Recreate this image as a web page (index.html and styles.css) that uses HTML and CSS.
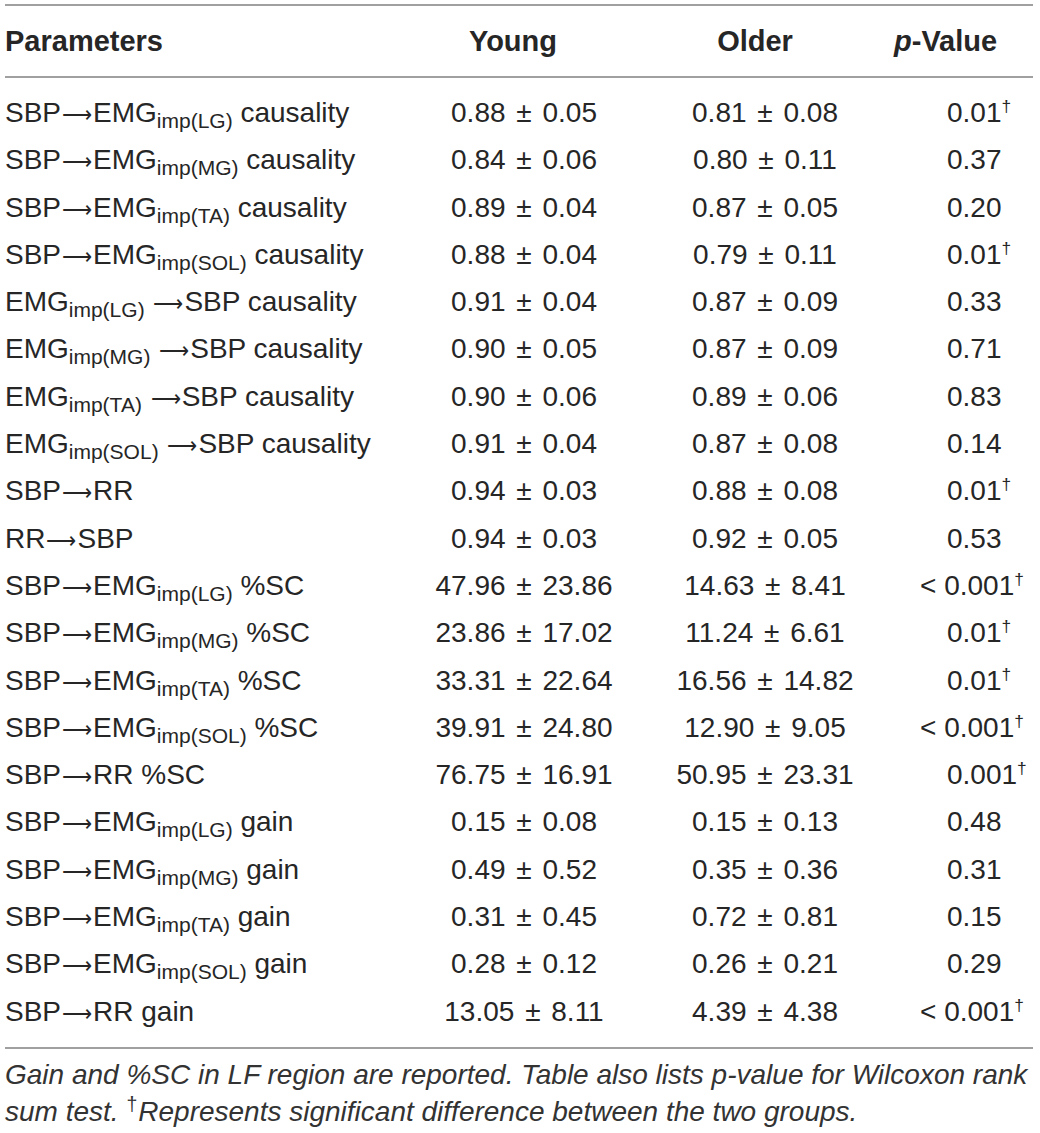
FILE: index.html
```html
<!DOCTYPE html>
<html>
<head>
    <title>Baroreflex and muscle causality</title>
    <link rel="stylesheet" href="styles.css">
</head>

<body>
    <table class="dataTable">
        <colgroup>
            <col class="colParam">
            <col class="colYoung">
            <col class="colOlder">
            <col class="colP">
        </colgroup>
        <thead>
            <tr>
                <th class="param">Parameters</th>
                <th class="youngHead">Young</th>
                <th class="olderHead">Older</th>
                <th class="pHead"><i>p</i>-Value</th>
            </tr>
        </thead>
        <tbody>
            <tr><td class="param">SBP<span class="arr">&#x27F6;</span>EMG<sub>imp(LG)</sub> causality</td><td class="num">0.88 &plusmn; 0.05</td><td class="num">0.81 &plusmn; 0.08</td><td class="pVal">0.01<sup>&dagger;</sup></td></tr>
            <tr><td class="param">SBP<span class="arr">&#x27F6;</span>EMG<sub>imp(MG)</sub> causality</td><td class="num">0.84 &plusmn; 0.06</td><td class="num">0.80 &plusmn; 0.11</td><td class="pVal">0.37</td></tr>
            <tr><td class="param">SBP<span class="arr">&#x27F6;</span>EMG<sub>imp(TA)</sub> causality</td><td class="num">0.89 &plusmn; 0.04</td><td class="num">0.87 &plusmn; 0.05</td><td class="pVal">0.20</td></tr>
            <tr><td class="param">SBP<span class="arr">&#x27F6;</span>EMG<sub>imp(SOL)</sub> causality</td><td class="num">0.88 &plusmn; 0.04</td><td class="num">0.79 &plusmn; 0.11</td><td class="pVal">0.01<sup>&dagger;</sup></td></tr>
            <tr><td class="param">EMG<sub>imp(LG)</sub> <span class="arr">&#x27F6;</span>SBP causality</td><td class="num">0.91 &plusmn; 0.04</td><td class="num">0.87 &plusmn; 0.09</td><td class="pVal">0.33</td></tr>
            <tr><td class="param">EMG<sub>imp(MG)</sub> <span class="arr">&#x27F6;</span>SBP causality</td><td class="num">0.90 &plusmn; 0.05</td><td class="num">0.87 &plusmn; 0.09</td><td class="pVal">0.71</td></tr>
            <tr><td class="param">EMG<sub>imp(TA)</sub> <span class="arr">&#x27F6;</span>SBP causality</td><td class="num">0.90 &plusmn; 0.06</td><td class="num">0.89 &plusmn; 0.06</td><td class="pVal">0.83</td></tr>
            <tr><td class="param">EMG<sub>imp(SOL)</sub> <span class="arr">&#x27F6;</span>SBP causality</td><td class="num">0.91 &plusmn; 0.04</td><td class="num">0.87 &plusmn; 0.08</td><td class="pVal">0.14</td></tr>
            <tr><td class="param">SBP<span class="arr">&#x27F6;</span>RR</td><td class="num">0.94 &plusmn; 0.03</td><td class="num">0.88 &plusmn; 0.08</td><td class="pVal">0.01<sup>&dagger;</sup></td></tr>
            <tr><td class="param">RR<span class="arr">&#x27F6;</span>SBP</td><td class="num">0.94 &plusmn; 0.03</td><td class="num">0.92 &plusmn; 0.05</td><td class="pVal">0.53</td></tr>
            <tr><td class="param">SBP<span class="arr">&#x27F6;</span>EMG<sub>imp(LG)</sub> %SC</td><td class="num">47.96 &plusmn; 23.86</td><td class="num">14.63 &plusmn; 8.41</td><td class="pVal"><span class="lt">&lt; </span>0.001<sup>&dagger;</sup></td></tr>
            <tr><td class="param">SBP<span class="arr">&#x27F6;</span>EMG<sub>imp(MG)</sub> %SC</td><td class="num">23.86 &plusmn; 17.02</td><td class="num">11.24 &plusmn; 6.61</td><td class="pVal">0.01<sup>&dagger;</sup></td></tr>
            <tr><td class="param">SBP<span class="arr">&#x27F6;</span>EMG<sub>imp(TA)</sub> %SC</td><td class="num">33.31 &plusmn; 22.64</td><td class="num">16.56 &plusmn; 14.82</td><td class="pVal">0.01<sup>&dagger;</sup></td></tr>
            <tr><td class="param">SBP<span class="arr">&#x27F6;</span>EMG<sub>imp(SOL)</sub> %SC</td><td class="num">39.91 &plusmn; 24.80</td><td class="num">12.90 &plusmn; 9.05</td><td class="pVal"><span class="lt">&lt; </span>0.001<sup>&dagger;</sup></td></tr>
            <tr><td class="param">SBP<span class="arr">&#x27F6;</span>RR %SC</td><td class="num">76.75 &plusmn; 16.91</td><td class="num">50.95 &plusmn; 23.31</td><td class="pVal">0.001<sup>&dagger;</sup></td></tr>
            <tr><td class="param">SBP<span class="arr">&#x27F6;</span>EMG<sub>imp(LG)</sub> gain</td><td class="num">0.15 &plusmn; 0.08</td><td class="num">0.15 &plusmn; 0.13</td><td class="pVal">0.48</td></tr>
            <tr><td class="param">SBP<span class="arr">&#x27F6;</span>EMG<sub>imp(MG)</sub> gain</td><td class="num">0.49 &plusmn; 0.52</td><td class="num">0.35 &plusmn; 0.36</td><td class="pVal">0.31</td></tr>
            <tr><td class="param">SBP<span class="arr">&#x27F6;</span>EMG<sub>imp(TA)</sub> gain</td><td class="num">0.31 &plusmn; 0.45</td><td class="num">0.72 &plusmn; 0.81</td><td class="pVal">0.15</td></tr>
            <tr><td class="param">SBP<span class="arr">&#x27F6;</span>EMG<sub>imp(SOL)</sub> gain</td><td class="num">0.28 &plusmn; 0.12</td><td class="num">0.26 &plusmn; 0.21</td><td class="pVal">0.29</td></tr>
            <tr><td class="param">SBP<span class="arr">&#x27F6;</span>RR gain</td><td class="num">13.05 &plusmn; 8.11</td><td class="num">4.39 &plusmn; 4.38</td><td class="pVal"><span class="lt">&lt; </span>0.001<sup>&dagger;</sup></td></tr>
        </tbody>
    </table>

    <p class="footnote">Gain and %SC in LF region are reported. Table also lists p-value for Wilcoxon rank sum test. <sup>&dagger;</sup>Represents significant difference between the two groups.</p>
</body>
</html>
```

FILE: styles.css
```css
html,body {margin: 0; padding: 0;}

body
{
    background: white;
    color: #262626;
    font-family: "Liberation Sans", Arial, sans-serif;
    padding: 0 7px 0 5px;
}

.dataTable
{
    width: 1028px;
    margin-top: 4px;
    border-collapse: collapse;
    table-layout: fixed;
    border-top: 2px solid #a0a0a0;
    border-bottom: 2px solid #a0a0a0;
    font-size: 28px;
}

.colParam {width: 406px;}
.colYoung {width: 226px;}
.colOlder {width: 256px;}
.colP {width: 140px;}

.dataTable th
{
    height: 70px;
    padding: 0;
    font-size: 29px;
    font-weight: bold;
    text-align: center;
    border-bottom: 2px solid #a0a0a0;
}

.dataTable .youngHead {padding-right: 22px;}
.dataTable .olderHead {padding-right: 20px;}

.dataTable td
{
    padding: 0;
    line-height: 47.3px;
    text-align: center;
    white-space: nowrap;
}

.dataTable tbody tr:first-child td {padding-top: 11px;}
.dataTable tbody tr:last-child td {padding-bottom: 12px;}

.dataTable .param {text-align: left;}
.dataTable .num {word-spacing: 3px;}
.dataTable .pHead {text-align: left; padding-left: 1px;}
.dataTable .pVal {text-align: left; padding-left: 54px;}

.arr
{
    font-family: "DejaVu Sans", sans-serif;
    font-size: 21px;
    font-weight: 200;
    line-height: 0;
    margin: 0 1px;
}

.lt {margin-left: -27px;}

sub
{
    font-size: 75%;
    line-height: 0;
    vertical-align: -6px;
}

sup
{
    font-size: 62%;
    line-height: 0;
    vertical-align: 10px;
}

.footnote
{
    margin: 7px 0 0 0;
    font-size: 28px;
    font-style: italic;
    line-height: 37px;
    color: #333;
}

.footnote sup
{
    font-style: normal;
    font-size: 70%;
    margin-right: 1px;
}
```
